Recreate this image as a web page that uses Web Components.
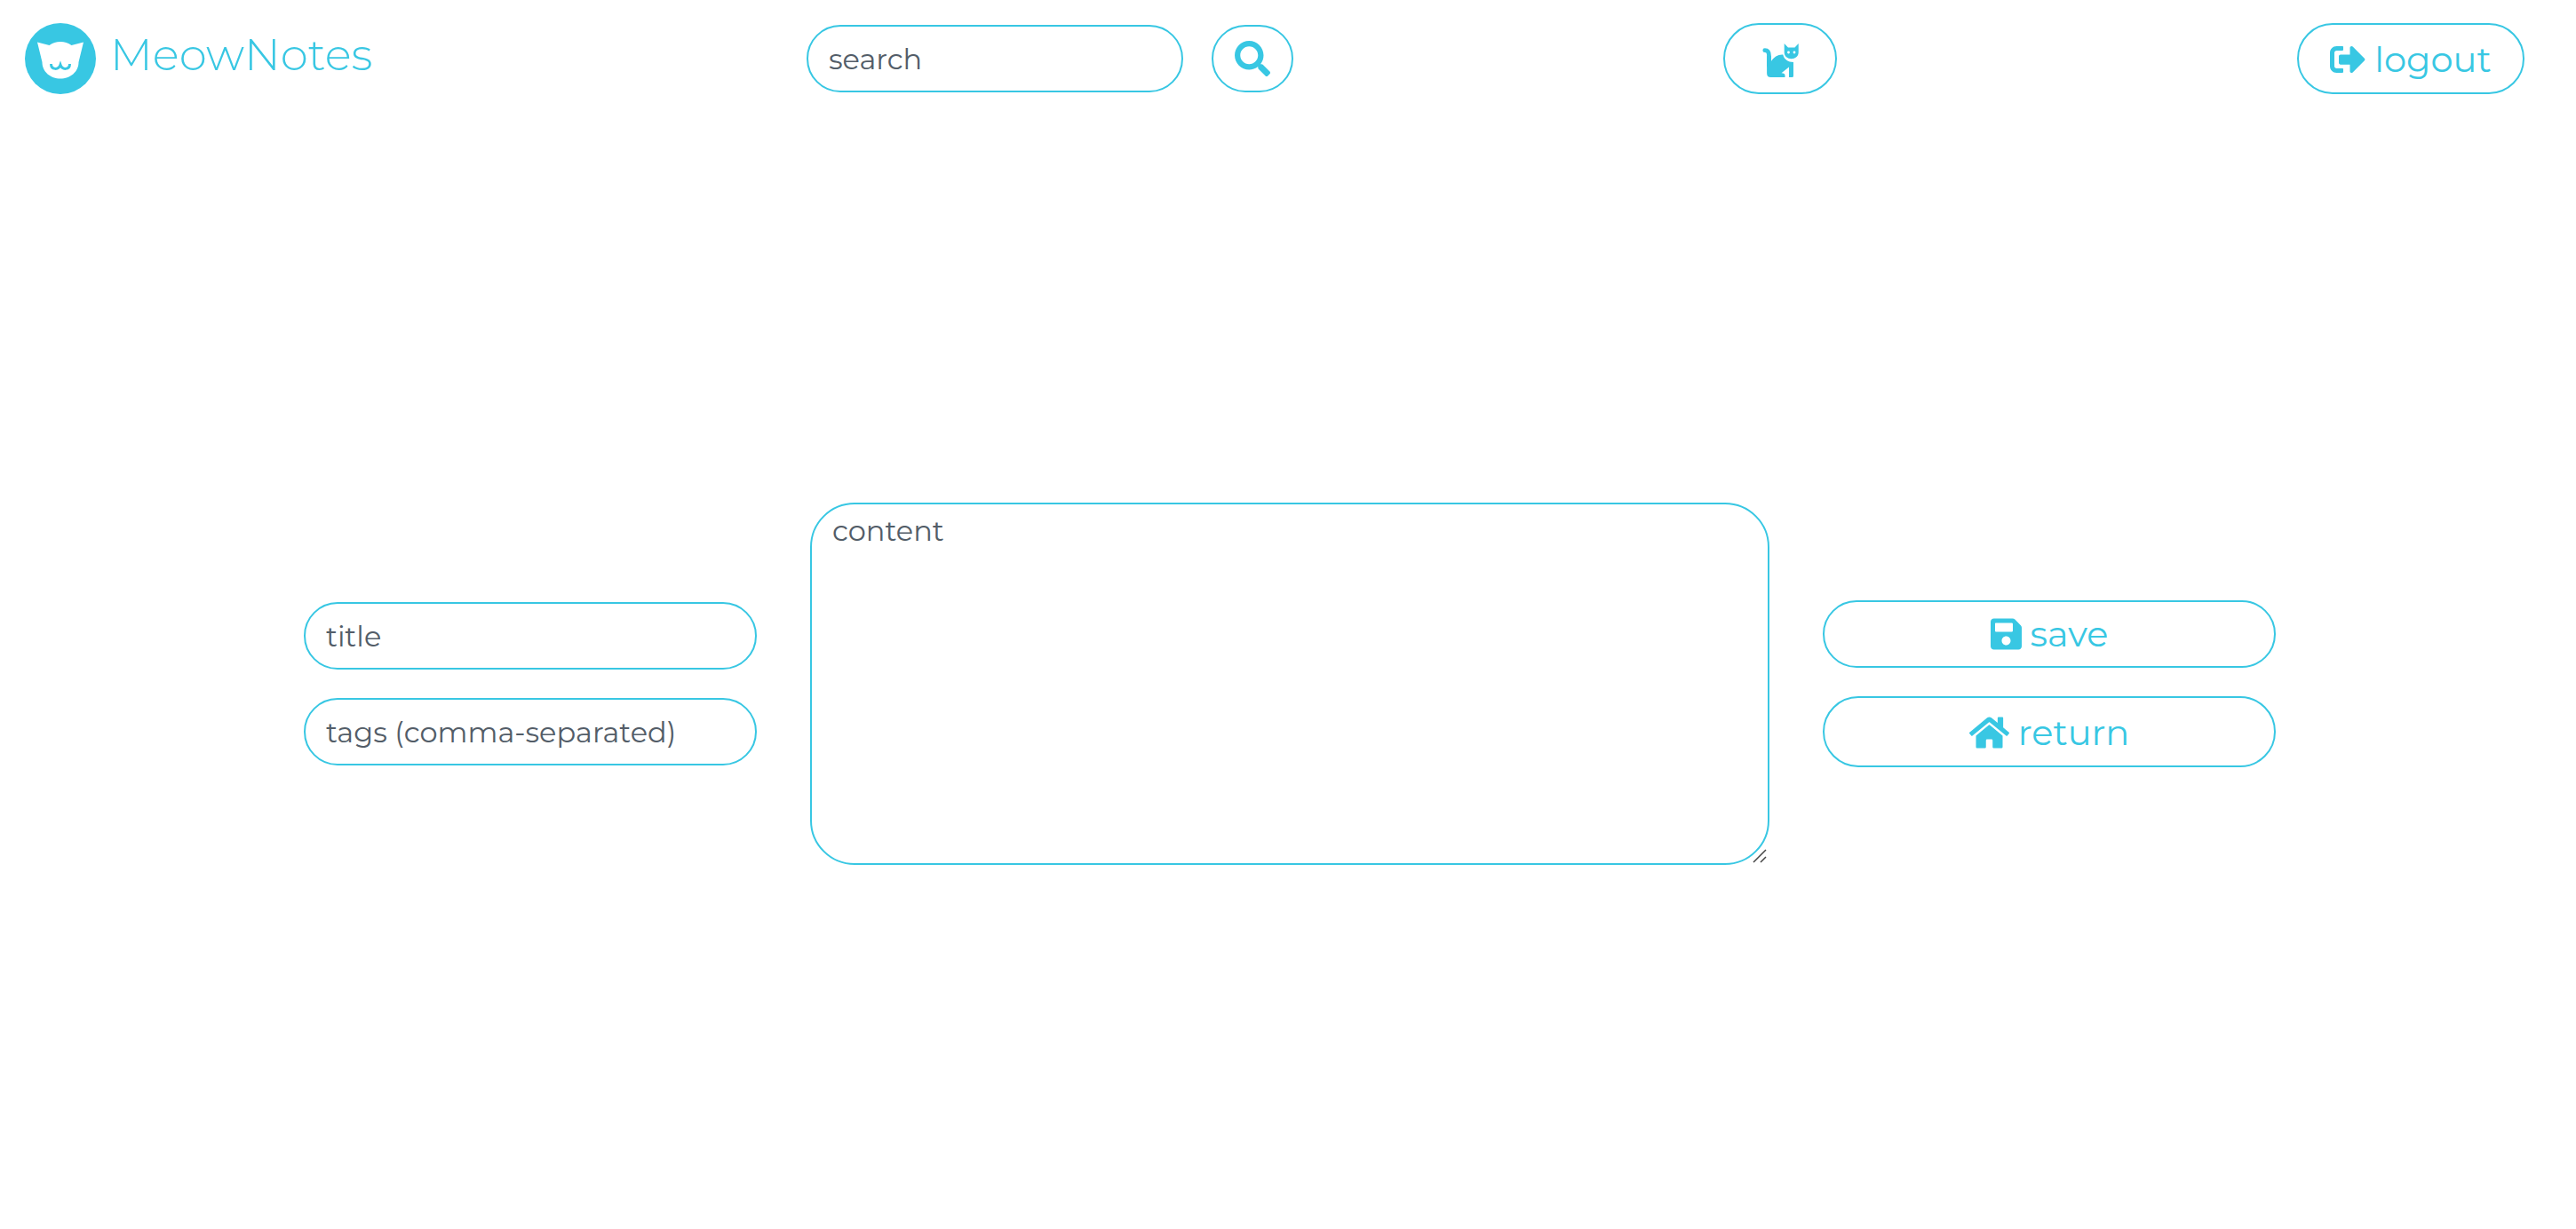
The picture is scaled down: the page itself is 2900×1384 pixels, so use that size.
<!DOCTYPE html>
<html lang="en">
<head>
<meta charset="utf-8">
<title>MeowNotes</title>
<style>
:root { --accent: #38c7e3; --ink: #535d68; --line: 2px solid var(--accent); }
body { margin: 0; background: #fff; color: var(--accent); font-family: Montserrat, Inter, "Open Sans", sans-serif; font-size: 40px; line-height: 48px; }
</style>
</head>
<body>
<meow-app></meow-app>
<script>
const define = (name, html) => {
  const template = document.createElement('template');
  template.innerHTML = '<style>*{box-sizing:border-box}:host{display:block;box-sizing:border-box}</style>' + html;
  customElements.define(name, class extends HTMLElement {
    constructor() {
      super();
      this.attachShadow({ mode: 'open' }).append(template.content.cloneNode(true));
      const label = this.getAttribute('label') || '';
      const field = this.shadowRoot.querySelector('input, textarea');
      if (field) field.placeholder = label;
      const control = field || this.shadowRoot.querySelector('button');
      if (control && label) control.setAttribute('aria-label', label);
    }
  });
};

const icons = {
  search: ['0 0 512 512', '<path d="M505 442.700L405.300 343c-4.500-4.500-10.600-7-17-7H372c27.600-35.300 44-79.700 44-128C416 93.100 322.900 0 208 0S0 93.100 0 208s93.100 208 208 208c48.300 0 92.700-16.400 128-44v16.300c0 6.400 2.500 12.500 7 17l99.700 99.700c9.400 9.400 24.600 9.400 33.900 0l28.300-28.300c9.400-9.400 9.400-24.600.1-34zM208 336c-70.700 0-128-57.200-128-128 0-70.700 57.200-128 128-128 70.700 0 128 57.200 128 128 0 70.700-57.200 128-128 128z"/>'],
  logout: ['0 0 512 512', '<path d="M497 273L329 441c-15 15-41 4.500-41-17v-96H152c-13.300 0-24-10.700-24-24v-96c0-13.300 10.700-24 24-24h136V88c0-21.400 25.900-32 41-17l168 168c9.300 9.400 9.300 24.600 0 34zM192 436v-40c0-6.600-5.400-12-12-12H96c-17.700 0-32-14.300-32-32V160c0-17.700 14.300-32 32-32h84c6.600 0 12-5.400 12-12V76c0-6.600-5.400-12-12-12H96c-53 0-96 43-96 96v192c0 53 43 96 96 96h84c6.600 0 12-5.400 12-12z"/>'],
  save: ['0 0 448 512', '<path d="M433.900 129.900l-83.900-83.900A48 48 0 0 0 316.100 32H48C21.500 32 0 53.500 0 80v352c0 26.500 21.500 48 48 48h352c26.500 0 48-21.500 48-48V163.900a48 48 0 0 0-14.100-34zM224 416c-35.300 0-64-28.700-64-64s28.700-64 64-64 64 28.700 64 64-28.700 64-64 64zm96-304.500V212c0 6.600-5.400 12-12 12H76c-6.600 0-12-5.400-12-12V108c0-6.600 5.400-12 12-12h228.500c3.200 0 6.200 1.300 8.500 3.500l3.500 3.500a12 12 0 0 1 3.500 8.500z"/>'],
  home: ['0 0 576 512', '<path d="M280.400 148.300L96 300.100V464a16 16 0 0 0 16 16l112.100-.3a16 16 0 0 0 15.900-16V368a16 16 0 0 1 16-16h64a16 16 0 0 1 16 16v95.600a16 16 0 0 0 16 16.100L464 480a16 16 0 0 0 16-16V300L295.700 148.300a12.200 12.200 0 0 0-15.300 0zM571.600 251.500L488 182.600V44.100a12 12 0 0 0-12-12h-56a12 12 0 0 0-12 12v72.600L318.500 43a48 48 0 0 0-61 0L4.300 251.500a12 12 0 0 0-1.600 16.900l25.500 31a12 12 0 0 0 16.900 1.600l235.200-193.700a12.200 12.200 0 0 1 15.300 0L530.900 301a12 12 0 0 0 16.900-1.600l25.500-31a12 12 0 0 0-1.700-16.900z"/>'],
  cat: ['3 3 42 40', '<path d="M6.800 12.700C10.500 12.700 11.500 15 11.500 19V30" fill="none" stroke="currentColor" stroke-width="4.800" stroke-linecap="round"/><path d="M9.100 19V38.500Q9.100 43 13.500 43H29.500V41Q29.500 38.300 25.500 38.300L34 31.500V43H37.500Q39 43 39 41.500V26C33 26 28.500 23 27.300 17.500C22 17 17 20 13.900 25V19Z"/><path d="M28.700 5L33 9.500H40.500L44.700 5V15C44.700 19.500 41 22.200 36.700 22.200S28.700 19.500 28.700 15Z"/><circle cx="33.500" cy="15" r="1.400" fill="#fff"/><circle cx="40" cy="15" r="1.400" fill="#fff"/>']
};
customElements.define('meow-icon', class extends HTMLElement {
  constructor() {
    super();
    this.attachShadow({ mode: 'open' });
  }
  connectedCallback() {
    const [box, shape] = icons[this.getAttribute('name')];
    this.shadowRoot.innerHTML = `<style>:host{display:block;height:40px}svg{display:block;height:100%;fill:currentColor}</style><svg viewBox="${box}" aria-hidden="true">${shape}</svg>`;
  }
});

define('meow-brand', `<style>
:host{flex:0 0 396px}
a{display:flex;align-items:center;gap:16px;color:inherit;text-decoration:none;font-size:50px;line-height:72px;font-weight:300}
svg{width:80px;height:80px;flex:none}
span{padding-bottom:8px}
</style><a href="#"><svg viewBox="0 0 80 80" aria-hidden="true"><circle cx="40" cy="40" r="40" fill="currentColor"/><path fill="#fff" d="M14 21.500L27.500 25Q33 21 40 21T52.500 25L66 21.500L60.500 44C60.500 55 51 62.500 40 62.500S19.500 55 19.500 44Z"/><path d="M29.500 46C29.500 53 38 53 40 47C42 53 50.500 53 50.500 46" fill="none" stroke="currentColor" stroke-width="3"/></svg><span>MeowNotes</span></a>`);

define('meow-field', `<style>
input{display:block;width:100%;height:76px;margin:0;padding:0 23px;border:var(--line);border-radius:40px;background:none;color:var(--ink);font:inherit;font-size:32px;line-height:40px;outline:0}
input::placeholder{color:inherit;opacity:1}
</style><input type="text">`);

define('meow-area', `<style>
:host{position:relative}
textarea{display:block;width:100%;height:408px;margin:0;padding:10px 23px;border:var(--line);border-radius:50px;background:none;color:var(--ink);font:inherit;font-size:32px;line-height:40px;outline:0;resize:none}
textarea::placeholder{color:inherit;opacity:1}
svg{position:absolute;right:3px;bottom:2px;width:16px;height:16px}
</style><textarea></textarea><svg viewBox="0 0 16 16" aria-hidden="true"><path d="M1 15L15 1M9 15L15 9" stroke="#444" stroke-width="1.500"/></svg>`);

define('meow-button', `<style>
button{display:flex;align-items:center;justify-content:center;gap:10px;width:100%;height:80px;margin:0;padding:2px 0 0;border:var(--line);border-radius:40px;background:none;color:inherit;font:inherit;cursor:pointer}
:host([compact]) button{height:76px;padding:0}
</style><button type="button"><slot></slot></button>`);

define('meow-header', `<style>
header{display:flex;align-items:center;justify-content:space-between;padding:26px 58px 50px 28px}
form{display:flex;align-items:center;gap:32px}
meow-field{width:424px}
.find{width:92px}
.cat{width:128px;margin-right:34px}
.out{width:256px}
</style><header><meow-brand></meow-brand>
<form role="search"><meow-field label="search"></meow-field><meow-button compact class="find"><meow-icon name="search"></meow-icon></meow-button></form>
<meow-button class="cat"><meow-icon name="cat"></meow-icon></meow-button>
<meow-button class="out"><meow-icon name="logout"></meow-icon><span>logout</span></meow-button></header>`);

define('meow-editor', `<style>
:host{flex:1;display:flex}
main{flex:1;display:flex;align-items:center;gap:60px;padding:0 338px 0 342px}
section{flex:17 1 0;display:flex;flex-direction:column;gap:32px}
meow-area{flex:36 1 0}
</style><main>
<section><meow-field label="title"></meow-field><meow-field label="tags (comma-separated)"></meow-field></section>
<meow-area label="content"></meow-area>
<section><meow-button compact><meow-icon name="save"></meow-icon><span>save</span></meow-button><meow-button><meow-icon name="home"></meow-icon><span>return</span></meow-button></section>
</main>`);

define('meow-app', `<style>:host{display:flex;flex-direction:column;min-height:100vh}</style><meow-header></meow-header><meow-editor></meow-editor>`);
</script>
</body>
</html>
